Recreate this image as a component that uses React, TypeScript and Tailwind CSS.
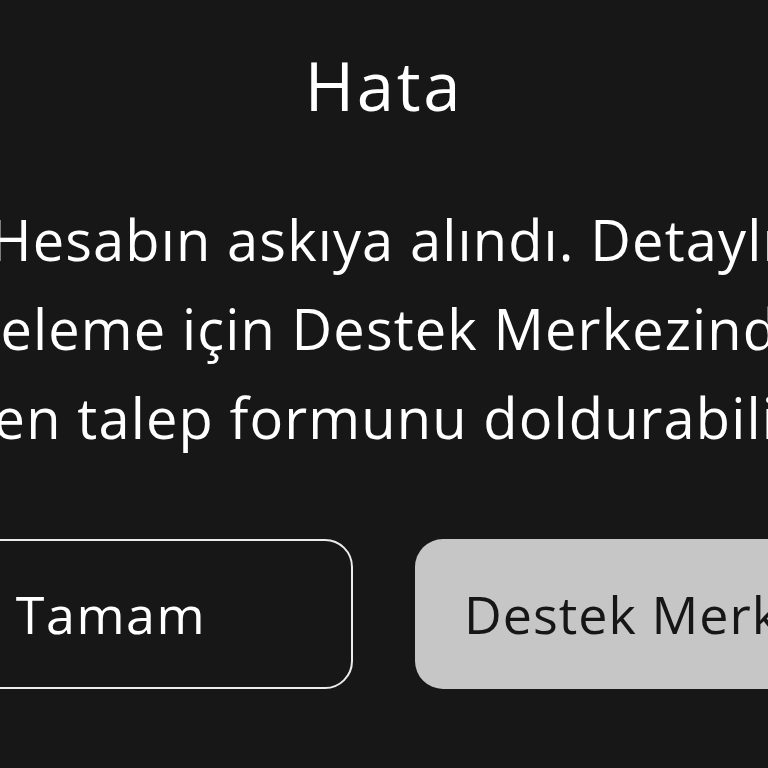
export default function App() {
  return (
    <div className="w-full h-[768px] bg-[#171717] overflow-hidden flex justify-center font-['Open_Sans',sans-serif]">
      <div className="w-[1030px] shrink-0 flex flex-col items-center">
        <h1 className="pt-[52px] text-[67px] leading-[66px] font-medium text-white tracking-[0.04em]">Hata</h1>
        <p className="mt-[77px] w-full text-center text-[56px] leading-[89px] text-white whitespace-nowrap tracking-[0.02em]">
          Hesabın askıya alındı. Detaylı
          <br />
          inceleme için Destek Merkezinden
          <br />
          hemen talep formunu doldurabilirsin.
        </p>
        <div className="mt-[77px] w-full grid grid-cols-2 gap-[62px]">
          <button className="h-[150px] rounded-[28px] border-2 border-[#ececec] text-white text-[52px] tracking-[0.03em]">
            Tamam
          </button>
          <button className="h-[150px] rounded-[28px] bg-[#c6c6c6] text-[#161616] text-[52px] tracking-[0.02em]">
            Destek Merkezi
          </button>
        </div>
      </div>
    </div>
  );
}
